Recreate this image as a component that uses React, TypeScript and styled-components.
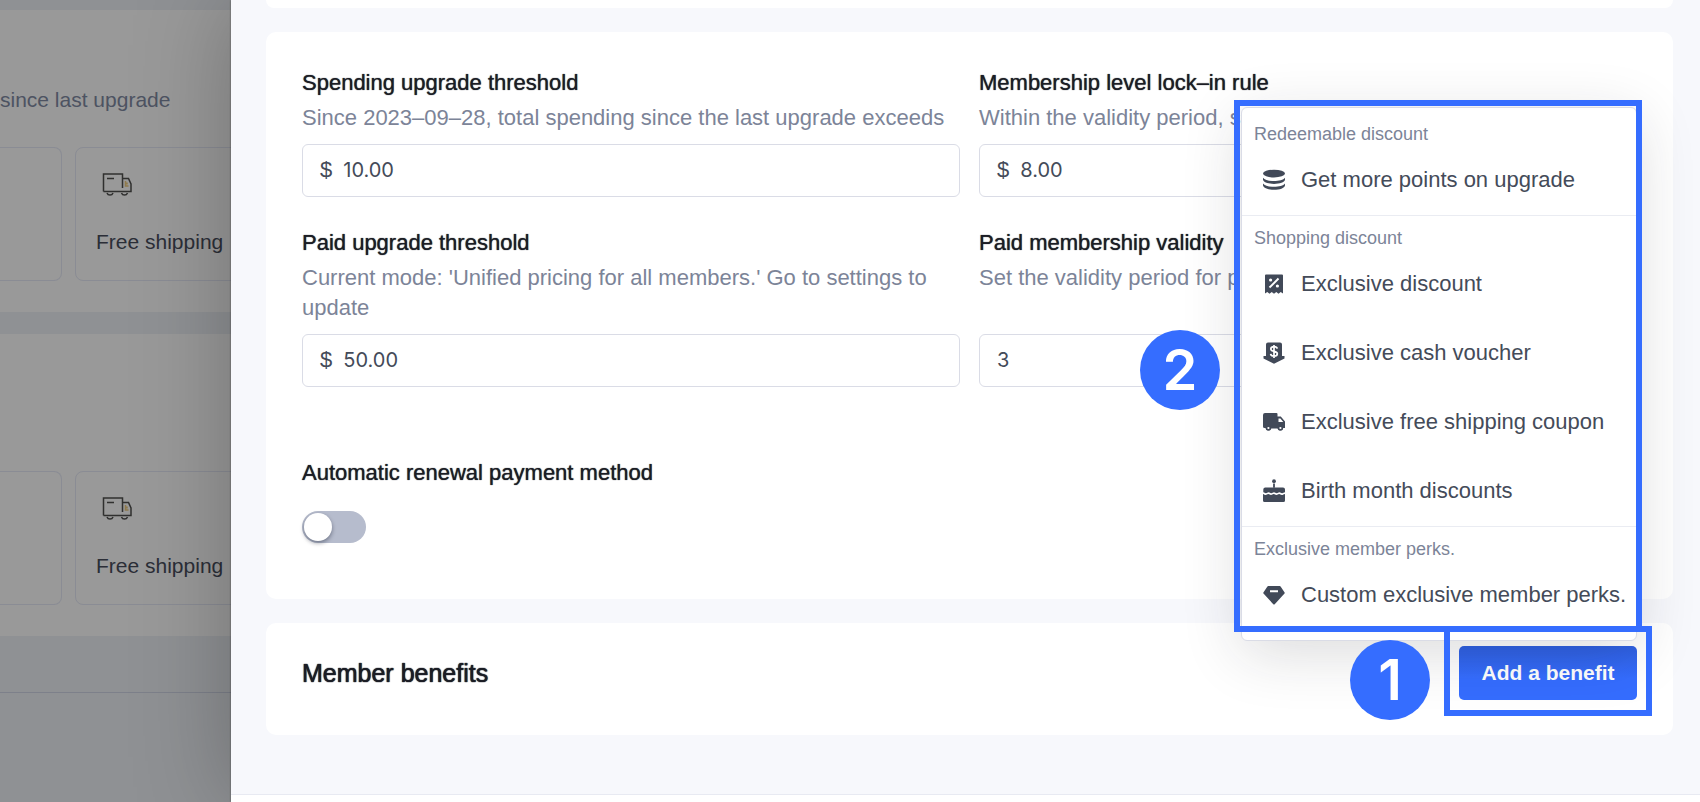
import React from "react";
import styled, { createGlobalStyle } from "styled-components";

const blue = "#356dff";
const ink = "#1b1d25";
const body = "#444b59";
const muted = "#7c8498";
const line = "#dadce6";
const canvas = "#f7f8fc";

const GlobalStyle = createGlobalStyle`
  *, *::before, *::after { box-sizing: border-box; }
  body {
    margin: 0;
    background: ${canvas};
    color: ${body};
    font-family: "Liberation Sans", Arial, sans-serif;
    font-size: 22px;
    line-height: 30px;
  }
  button, input { font: inherit; color: inherit; }
  h2, h3, p, ul { margin: 0; padding: 0; font-weight: 400; font-size: inherit; }
`;

const Page = styled.div`
  display: flex;
  height: 100vh;
  overflow: hidden;
`;

/* Dimmed page behind the drawer */
const Behind = styled.aside`
  flex: 0 0 231px;
  overflow: hidden;
  background: #8f9194;
  color: #2b2e37;
  font-size: 21px;
`;

const TierCard = styled.section`
  height: 302px;
  padding: 75px 0 32px;
  margin-bottom: 22px;
  background: #999999;
  white-space: nowrap;

  &:first-child { margin-top: 10px; }
`;

const TierNote = styled.p`
  height: 30px;
  margin-bottom: 32px;
  color: #4d5362;
`;

const Tiles = styled.div`
  display: flex;
  gap: 13px;
  height: 134px;
`;

const Tile = styled.div<{ $tail?: boolean }>`
  flex: 0 0 ${(p) => (p.$tail ? "62px" : "220px")};
  padding: 24px 20px;
  border: 1px solid #8a8c94;
  border-left-width: ${(p) => (p.$tail ? "0" : "1px")};
  border-radius: ${(p) => (p.$tail ? "0 8px 8px 0" : "8px")};

  svg { display: block; margin: 0 0 29px 6px; }
`;

const BehindFooter = styled.div`
  margin-top: 56px;
  border-top: 1px solid #7d808a;
`;

/* Drawer */
const Drawer = styled.main`
  position: relative;
  flex: 1;
  min-width: 0;
  display: flex;
  flex-direction: column;
  background: ${canvas};
  box-shadow: 0 0 90px rgba(0, 0, 0, 0.26), 0 0 2px rgba(0, 0, 0, 0.4);
`;

const Content = styled.div`
  flex: 1;
  display: flex;
  flex-direction: column;
  gap: 24px;
  padding: 0 27px 0 35px;
`;

const Card = styled.section`
  padding: 36px;
  background: #fff;
  border-radius: 10px;
`;

const PreviousCard = styled(Card)`
  height: 8px;
  padding: 0;
  border-radius: 0 0 10px 10px;
`;

const RulesCard = styled(Card)`
  padding-bottom: 56px;
`;

const BenefitsCard = styled(Card)`
  display: flex;
  align-items: center;
  justify-content: space-between;
  padding: 23px 36px 35px;
`;

const DrawerFooter = styled.footer`
  height: 8px;
  background: #fff;
  border-top: 1px solid #e8eaf2;
`;

const FieldGrid = styled.div`
  display: grid;
  grid-template-columns: 1fr 1fr;
  gap: 31px 19px;
`;

const Field = styled.div`
  display: flex;
  flex-direction: column;
  min-width: 0;
`;

const Label = styled.label`
  color: ${ink};
  text-shadow: 0 0 1px ${ink};
`;

const Hint = styled.p`
  margin: 5px 0 11px;
  color: ${muted};
`;

const InputBox = styled.div`
  display: flex;
  align-items: center;
  gap: 11px;
  height: 53px;
  margin-top: auto;
  padding: 0 17px 2px;
  border: 1px solid ${line};
  border-radius: 6px;
`;

const Input = styled.input`
  flex: 1;
  min-width: 0;
  padding: 0;
  border: 0;
  outline: 0;
  background: transparent;
  font-family: Inter, "Liberation Sans", sans-serif;
  font-size: 20px;
`;

const RenewalField = styled.div`
  display: flex;
  flex-direction: column;
  align-items: flex-start;
  gap: 23px;
  margin-top: 71px;
`;

const Switch = styled.input`
  appearance: none;
  display: flex;
  align-items: center;
  width: 64px;
  height: 32px;
  margin: 0;
  padding: 2px;
  border-radius: 16px;
  background: #b6bccd;

  &::before {
    content: "";
    width: 28px;
    height: 28px;
    border-radius: 50%;
    background: #fff;
    box-shadow: 0 2px 4px rgba(0, 10, 30, 0.4);
  }
  &:checked { background: ${blue}; justify-content: flex-end; }
`;

const Heading = styled.h2`
  color: ${ink};
  font-size: 25px;
  text-shadow: 0 0 1px ${ink}, 0 0 1px ${ink};
`;

const MenuAnchor = styled.div`
  position: relative;
`;

const AddButton = styled.button`
  display: block;
  width: 178px;
  height: 54px;
  padding: 0;
  border: 0;
  border-radius: 5px;
  background: linear-gradient(#2e5fe0, ${blue} 60%);
  color: #fff;
  font-size: 21px;
  font-weight: 700;
`;

const Menu = styled.div`
  position: absolute;
  right: 0;
  bottom: calc(100% + 5px);
  width: 396px;
  padding: 4px 0 10px;
  border: 1px solid ${line};
  border-radius: 6px;
  background: #fff;
  box-shadow: 0 12px 60px rgba(30, 30, 40, 0.16);
`;

const MenuGroup = styled.section`
  & + & { border-top: 1px solid #eaecf2; }
`;

const GroupTitle = styled.h3`
  padding: 12px 12px 1px;
  color: ${muted};
  font-size: 18px;
  line-height: 21px;
`;

const MenuList = styled.ul`
  list-style: none;
`;

const MenuItem = styled.button`
  display: flex;
  align-items: center;
  gap: 15px;
  width: 100%;
  height: 69px;
  padding: 0 20px 2px;
  border: 0;
  background: transparent;
  text-align: left;
  white-space: nowrap;

  svg { flex: none; }
`;

/* Walkthrough marks laid over the menu and the button */
const Highlight = styled.div<{ $inset: string }>`
  position: absolute;
  inset: ${(p) => p.$inset};
  border: 6px solid ${blue};
  pointer-events: none;
`;

const Step = styled.div<{ $gap: number; $top: number }>`
  position: absolute;
  right: calc(100% + ${(p) => p.$gap}px);
  top: ${(p) => p.$top}px;
  display: flex;
  align-items: center;
  justify-content: center;
  width: 80px;
  height: 80px;
  border-radius: 50%;
  background: ${blue};
  color: #fff;
  font-family: Inter, "Liberation Sans", sans-serif;
  font-size: 56px;
  font-weight: 600;
`;

const icons: Record<string, React.ReactNode> = {
  points: (
    <>
      <ellipse cx="12" cy="5.600" rx="11" ry="3.900" />
      <path d="M1 9.800c1.600 2.200 6 3.300 11 3.300s9.400-1.100 11-3.300v2c-.6 2.500-5.200 4.100-11 4.100S1.600 14.300 1 11.800zM1 15.400c1.600 2.200 6 3.300 11 3.300s9.400-1.100 11-3.300v2c-.6 2.600-5.200 4.300-11 4.300S1.600 20 1 17.400z" />
    </>
  ),
  discount: (
    <>
      <path d="M4 2.500h16a1 1 0 0 1 1 1V21.500l-2.300-1.400-2.200 1.700-2.200-1.700-2.300 1.700-2.300-1.700-2.200 1.700-2.200-1.700L3 21.500V3.500a1 1 0 0 1 1-1z" />
      <path d="M16.500 6.500l-9 9" stroke="#fff" strokeWidth="1.900" />
      <circle cx="8.600" cy="8" r="1.600" fill="#fff" />
      <circle cx="15.400" cy="14" r="1.600" fill="#fff" />
    </>
  ),
  voucher: (
    <>
      <path d="M6 1.500h12a2 2 0 0 1 2 2V15h2.500v2.500L12 22.800 1.500 17.500V15H4V3.500a2 2 0 0 1 2-2z" />
      <path
        d="M15.200 7.600C15 6.300 13.700 5.600 12 5.600c-1.900 0-3.200.9-3.200 2.400 0 3.400 6.500 1.500 6.500 4.800 0 1.500-1.400 2.400-3.300 2.400s-3.200-.9-3.400-2.300M12 4v13"
        stroke="#fff"
        strokeWidth="1.700"
        fill="none"
      />
    </>
  ),
  truck: (
    <>
      <path d="M3 3h11.500a1 1 0 0 1 1 1v2.500h3.300L23 11.500V18h-1.700a3 3 0 0 1-5.800.6H9.300A3 3 0 0 1 3.500 18H2.500A1.500 1.500 0 0 1 1 16.500V5a2 2 0 0 1 2-2zm13.500 5.500V12h4.800l-2.900-3.500z" fillRule="evenodd" />
      <circle cx="6.400" cy="18" r="2.600" />
      <circle cx="18.400" cy="18" r="2.600" />
      <circle cx="6.400" cy="18" r="1.100" fill="#fff" />
      <circle cx="18.400" cy="18" r="1.100" fill="#fff" />
    </>
  ),
  cake: (
    <>
      <circle cx="12" cy="2.200" r="1.900" />
      <path d="M11.100 4.500h1.800v4.300h-1.800z" />
      <path d="M3 8.500h18a2 2 0 0 1 2 2v2.800c-1.500 0-1.500 1-2.900 1s-1.400-1-2.700-1-1.400 1-2.700 1-1.400-1-2.700-1-1.400 1-2.700 1-1.400-1-2.700-1-1.400 1-2.700 1c-1.300 0-1.300-1-2.600-1v-2.800a2 2 0 0 1 2-2z" />
      <path d="M1 15c1.200.2 1.300 1.100 2.600 1.100 1.300 0 1.400-1 2.700-1s1.400 1 2.700 1 1.400-1 2.700-1 1.400 1 2.700 1 1.400-1 2.700-1 1.400 1 2.700 1S21.500 15.200 23 15v6.500a1.500 1.500 0 0 1-1.500 1.500h-19A1.500 1.500 0 0 1 1 21.500z" />
    </>
  ),
  perk: (
    <path d="M6.200 3h11.600a1 1 0 0 1 .8.400l4 6a1 1 0 0 1-.1 1.200L12.700 21.200a1 1 0 0 1-1.400 0L1.500 10.600a1 1 0 0 1-.1-1.200l4-6a1 1 0 0 1 .8-.4zM8 7.300v2h8v-2z" fillRule="evenodd" />
  ),
};

const MenuIcon = ({ name }: { name: string }) => (
  <svg width="24" height="24" viewBox="0 0 24 24" fill="#414958" aria-hidden="true">
    {icons[name]}
  </svg>
);

const DeliveryIcon = () => (
  <svg width="30" height="26" viewBox="0 0 30 26" fill="none" stroke="#30302f" strokeWidth="1.500" aria-hidden="true">
    <path d="M1.500 19.500V2H20.500V16M1.500 19.500H29V12l-2.500-5.500h-6M5 6.500h7" />
    <path d="M5 21a3.200 3.200 0 0 0 6 0M19.500 21a3.200 3.200 0 0 0 6 0" />
    <path d="M23.500 9v5h3M25 10.500v2" stroke="#8f7a4c" />
  </svg>
);

const menuGroups = [
  { title: "Redeemable discount", items: [["points", "Get more points on upgrade"]] },
  {
    title: "Shopping discount",
    items: [
      ["discount", "Exclusive discount"],
      ["voucher", "Exclusive cash voucher"],
      ["truck", "Exclusive free shipping coupon"],
      ["cake", "Birth month discounts"],
    ],
  },
  { title: "Exclusive member perks.", items: [["perk", "Custom exclusive member perks."]] },
];

const fields = [
  {
    id: "spending",
    label: "Spending upgrade threshold",
    hint: "Since 2023–09–28, total spending since the last upgrade exceeds",
    prefix: "$",
    value: "10.00",
  },
  { id: "lock-in", label: "Membership level lock–in rule", hint: "Within the validity period, s", prefix: "$", value: "8.00" },
  {
    id: "paid",
    label: "Paid upgrade threshold",
    hint: "Current mode: 'Unified pricing for all members.' Go to settings to update",
    prefix: "$",
    value: "50.00",
  },
  { id: "validity", label: "Paid membership validity", hint: "Set the validity period for p", value: "3" },
];

const Tier = ({ note }: { note?: string }) => (
  <TierCard>
    <TierNote>{note}</TierNote>
    <Tiles>
      <Tile $tail />
      <Tile>
        <DeliveryIcon />
        Free shipping
      </Tile>
    </Tiles>
  </TierCard>
);

export default function App() {
  return (
    <>
      <GlobalStyle />
      <Page>
        <Behind>
          <Tier note="since last upgrade" />
          <Tier />
          <BehindFooter />
        </Behind>
        <Drawer>
          <Content>
            <PreviousCard />
            <RulesCard>
              <FieldGrid>
                {fields.map((f) => (
                  <Field key={f.id}>
                    <Label htmlFor={f.id}>{f.label}</Label>
                    <Hint>{f.hint}</Hint>
                    <InputBox>
                      {f.prefix && <span>{f.prefix}</span>}
                      <Input id={f.id} defaultValue={f.value} />
                    </InputBox>
                  </Field>
                ))}
              </FieldGrid>
              <RenewalField>
                <Label htmlFor="renewal">Automatic renewal payment method</Label>
                <Switch id="renewal" type="checkbox" role="switch" />
              </RenewalField>
            </RulesCard>
            <BenefitsCard>
              <Heading>Member benefits</Heading>
              <MenuAnchor>
                <AddButton type="button">Add a benefit</AddButton>
                <Menu>
                  {menuGroups.map((group) => (
                    <MenuGroup key={group.title}>
                      <GroupTitle>{group.title}</GroupTitle>
                      <MenuList>
                        {group.items.map(([icon, text]) => (
                          <li key={text}>
                            <MenuItem type="button">
                              <MenuIcon name={icon} />
                              {text}
                            </MenuItem>
                          </li>
                        ))}
                      </MenuList>
                    </MenuGroup>
                  ))}
                  <Highlight $inset="-8px -6px 8px -8px" />
                  <Step $gap={22} $top={222}>2</Step>
                </Menu>
                <Highlight $inset="-20px -15px -16px -15px" />
                <Step $gap={29} $top={-6}>1</Step>
              </MenuAnchor>
            </BenefitsCard>
          </Content>
          <DrawerFooter />
        </Drawer>
      </Page>
    </>
  );
}
